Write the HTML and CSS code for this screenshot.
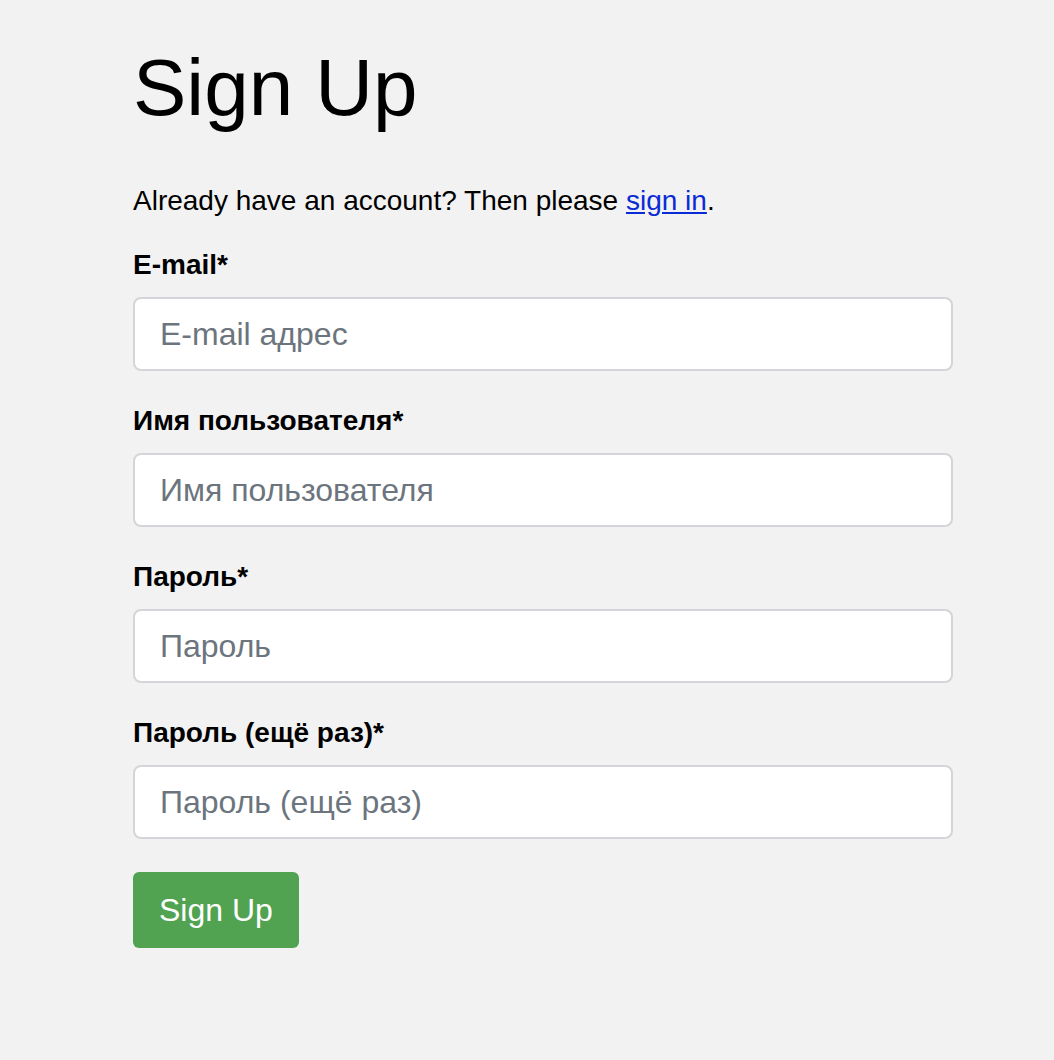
FILE: index.html
```html
<!DOCTYPE html>
<html lang="ru">
<head>
    <meta charset="UTF-8">
    <meta name="viewport" content="width=device-width, initial-scale=1.0">
    <link rel="stylesheet" href="styles.css">
    <title>Sign Up</title>
</head>
<body>

    <div class="container">
        <h1>Sign Up</h1>

        <p class="intro">Already have an account? Then please <a href="#">sign in</a>.</p>

        <form class="signup-form">
            <div class="form-group">
                <label for="email">E-mail*</label>
                <input type="email" id="email" placeholder="E-mail адрес">
            </div>

            <div class="form-group">
                <label for="username">Имя пользователя*</label>
                <input type="text" id="username" placeholder="Имя пользователя">
            </div>

            <div class="form-group">
                <label for="password1">Пароль*</label>
                <input type="password" id="password1" placeholder="Пароль">
            </div>

            <div class="form-group">
                <label for="password2">Пароль (ещё раз)*</label>
                <input type="password" id="password2" placeholder="Пароль (ещё раз)">
            </div>

            <button type="submit" class="btn-signup">Sign Up</button>
        </form>
    </div>

</body>
</html>
```

FILE: styles.css
```css
html {
    background-color: #f2f2f2;
}

body {
    font-family: "Liberation Sans", Arial, sans-serif;
    margin: 0;
    padding: 0;
    background-color: #f2f2f2;
    color: #000;
}

.container {
    width: 820px;
    margin-left: 133px;
    padding-top: 44px;
}

h1 {
    font-size: 80px;
    font-weight: normal;
    line-height: 88px;
    margin: 0 0 53px 0;
}

.intro {
    font-size: 28px;
    line-height: 32px;
    margin: 0 0 32px 0;
}

.intro a {
    color: #0a2bd6;
}

.signup-form {
    display: flex;
    flex-direction: column;
}

.form-group {
    display: flex;
    flex-direction: column;
    margin-bottom: 34px;
}

.form-group label {
    font-size: 28px;
    line-height: 32px;
    font-weight: bold;
    margin-bottom: 16px;
}

.form-group input {
    box-sizing: border-box;
    height: 74px;
    padding: 0 25px;
    font-family: "Liberation Sans", Arial, sans-serif;
    font-size: 32px;
    background-color: #ffffff;
    border: 2px solid #d3d5d8;
    border-radius: 8px;
}

.form-group input::placeholder {
    color: #6c757d;
}

.btn-signup {
    align-self: flex-start;
    margin-top: -1px;
    padding: 0 26px;
    height: 76px;
    font-family: "Liberation Sans", Arial, sans-serif;
    font-size: 32px;
    color: #ffffff;
    background-color: #51a351;
    border: none;
    border-radius: 6px;
    cursor: pointer;
}
```
